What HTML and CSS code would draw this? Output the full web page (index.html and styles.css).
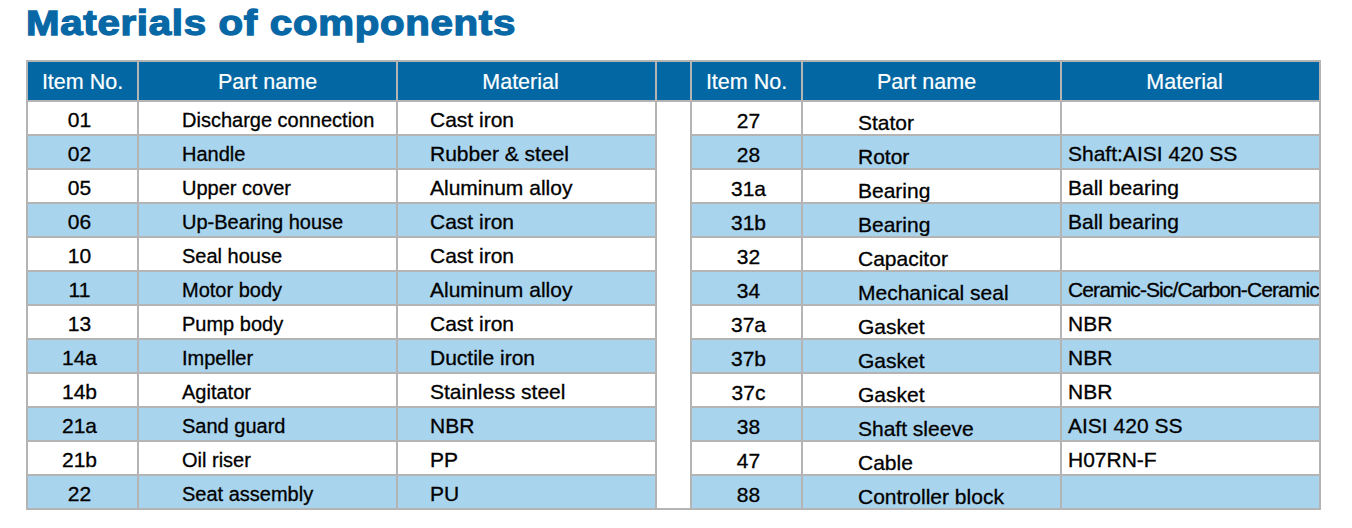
FILE: index.html
```html
<!DOCTYPE html>
<html lang="en">
<head>
<meta charset="utf-8">
<title>Materials of components</title>
<link rel="stylesheet" href="styles.css">
</head>
<body>
<div class="page">
  <h1 class="title">Materials of components</h1>
  <div class="sheet">
    <div class="row head">
      <div class="cell">Item No.</div>
      <div class="cell">Part name</div>
      <div class="cell mat-h">Material</div>
      <div class="cell"></div>
      <div class="cell">Item No.</div>
      <div class="cell part-h">Part name</div>
      <div class="cell mat-h">Material</div>
    </div>
    <div class="spacer"></div>

    <div class="row">
      <div class="cell l-no">01</div><div class="cell l-part">Discharge connection</div><div class="cell l-mat">Cast iron</div>
      <div class="cell r-no">27</div><div class="cell r-part">Stator</div><div class="cell r-mat"></div>
    </div>
    <div class="row alt">
      <div class="cell l-no">02</div><div class="cell l-part">Handle</div><div class="cell l-mat">Rubber &amp; steel</div>
      <div class="cell r-no">28</div><div class="cell r-part">Rotor</div><div class="cell r-mat">Shaft:AISI 420 SS</div>
    </div>
    <div class="row">
      <div class="cell l-no">05</div><div class="cell l-part">Upper cover</div><div class="cell l-mat">Aluminum alloy</div>
      <div class="cell r-no">31a</div><div class="cell r-part">Bearing</div><div class="cell r-mat">Ball bearing</div>
    </div>
    <div class="row alt">
      <div class="cell l-no">06</div><div class="cell l-part">Up-Bearing house</div><div class="cell l-mat">Cast iron</div>
      <div class="cell r-no">31b</div><div class="cell r-part">Bearing</div><div class="cell r-mat">Ball bearing</div>
    </div>
    <div class="row">
      <div class="cell l-no">10</div><div class="cell l-part">Seal house</div><div class="cell l-mat">Cast iron</div>
      <div class="cell r-no">32</div><div class="cell r-part">Capacitor</div><div class="cell r-mat"></div>
    </div>
    <div class="row alt">
      <div class="cell l-no">11</div><div class="cell l-part">Motor body</div><div class="cell l-mat">Aluminum alloy</div>
      <div class="cell r-no">34</div><div class="cell r-part">Mechanical seal</div><div class="cell r-mat tight">Ceramic-Sic/Carbon-Ceramic</div>
    </div>
    <div class="row">
      <div class="cell l-no">13</div><div class="cell l-part">Pump body</div><div class="cell l-mat">Cast iron</div>
      <div class="cell r-no">37a</div><div class="cell r-part">Gasket</div><div class="cell r-mat">NBR</div>
    </div>
    <div class="row alt">
      <div class="cell l-no">14a</div><div class="cell l-part">Impeller</div><div class="cell l-mat">Ductile iron</div>
      <div class="cell r-no">37b</div><div class="cell r-part">Gasket</div><div class="cell r-mat">NBR</div>
    </div>
    <div class="row">
      <div class="cell l-no">14b</div><div class="cell l-part">Agitator</div><div class="cell l-mat">Stainless steel</div>
      <div class="cell r-no">37c</div><div class="cell r-part">Gasket</div><div class="cell r-mat">NBR</div>
    </div>
    <div class="row alt">
      <div class="cell l-no">21a</div><div class="cell l-part">Sand guard</div><div class="cell l-mat">NBR</div>
      <div class="cell r-no">38</div><div class="cell r-part">Shaft sleeve</div><div class="cell r-mat">AISI 420 SS</div>
    </div>
    <div class="row">
      <div class="cell l-no">21b</div><div class="cell l-part">Oil riser</div><div class="cell l-mat">PP</div>
      <div class="cell r-no">47</div><div class="cell r-part">Cable</div><div class="cell r-mat">H07RN-F</div>
    </div>
    <div class="row alt">
      <div class="cell l-no">22</div><div class="cell l-part">Seat assembly</div><div class="cell l-mat">PU</div>
      <div class="cell r-no">88</div><div class="cell r-part">Controller block</div><div class="cell r-mat"></div>
    </div>
  </div>
</div>
</body>
</html>
```

FILE: styles.css
```css
html, body {
  margin: 0;
  padding: 0;
  background: #ffffff;
}

.page {
  padding: 5px 0 0 26px;
  font-family: "Liberation Sans", Arial, sans-serif;
}

.title {
  width: max-content;
  margin: 0 0 20px 0;
  height: 35px;
  font-size: 35px;
  line-height: 35px;
  font-weight: 700;
  color: #0868a6;
  letter-spacing: 0.6px;
  -webkit-text-stroke: 1.3px #0868a6;
  transform: scaleX(1.15);
  transform-origin: left center;
  white-space: nowrap;
}

.sheet {
  display: inline-grid;
  grid-template-columns: 109px 257px 257px 33px 109px 257px 257px;
  grid-template-rows: 38px repeat(12, 32px);
  gap: 2px;
  padding: 2px;
  background: #b4b4b4;
}

.row {
  display: contents;
}

.cell {
  display: flex;
  align-items: center;
  background: #ffffff;
  color: #000000;
  white-space: nowrap;
  overflow: hidden;
  line-height: 24px;
  -webkit-text-stroke: 0.3px #000000;
}

.row.alt > .cell {
  background: #a9d4ee;
}

.row.head > .cell {
  background: #0267a3;
  color: #ffffff;
  -webkit-text-stroke: 0.2px #ffffff;
  justify-content: center;
  font-size: 21.5px;
  padding-top: 2px;
}

.row.head > .mat-h {
  padding-right: 12px;
}

.row.head > .part-h {
  padding-right: 10px;
}

.spacer {
  grid-column: 4;
  grid-row: 2 / 14;
  background: #ffffff;
}

.l-no {
  justify-content: center;
  font-size: 21px;
  padding: 4px 6px 0 0;
}

.l-part {
  font-size: 20px;
  padding: 4px 0 0 43px;
}

.l-mat {
  font-size: 21px;
  padding: 4px 0 0 32px;
}

.r-no {
  justify-content: center;
  font-size: 21px;
  padding: 5px 0 0 4px;
}

.r-part {
  font-size: 21px;
  padding: 10px 0 0 55px;
}

.r-mat {
  font-size: 21px;
  padding: 3px 0 0 6px;
}

.r-mat.tight {
  letter-spacing: -0.9px;
}
```
